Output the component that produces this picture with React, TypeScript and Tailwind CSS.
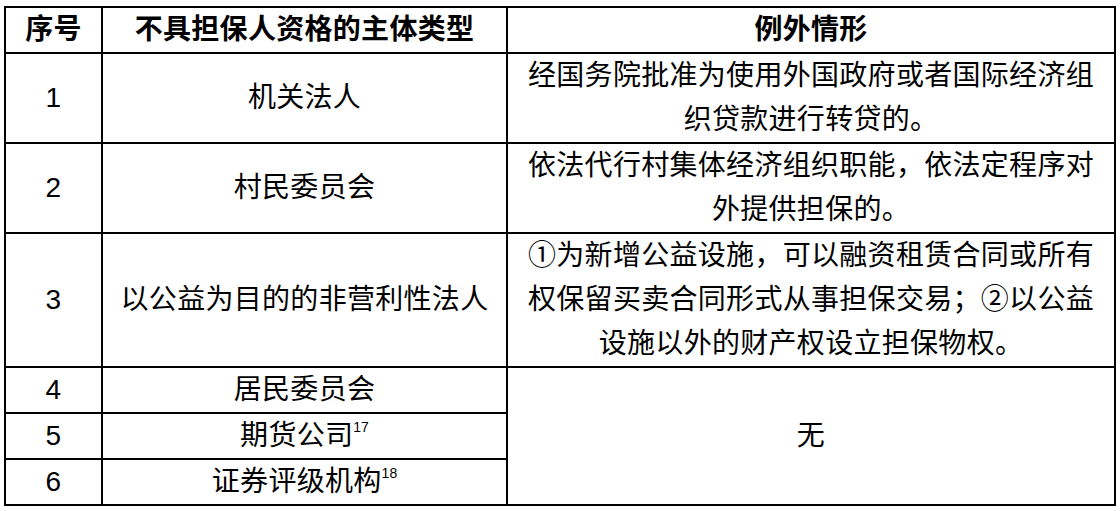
import React from "react";

const font = { fontFamily: '"Liberation Sans", "Noto Sans CJK SC", sans-serif' };

const rows: { n: string; type: React.ReactNode; ex?: string }[] = [
  { n: "1", type: "机关法人", ex: "经国务院批准为使用外国政府或者国际经济组织贷款进行转贷的。" },
  { n: "2", type: "村民委员会", ex: "依法代行村集体经济组织职能，依法定程序对外提供担保的。" },
  {
    n: "3",
    type: "以公益为目的的非营利性法人",
    ex: "①为新增公益设施，可以融资租赁合同或所有权保留买卖合同形式从事担保交易；②以公益设施以外的财产权设立担保物权。",
  },
];

export default function App() {
  const td = "border-2 border-black text-center align-middle px-[12px] py-0";
  return (
    <div className="bg-white w-[1120px] h-[511px] pt-[6px] pl-[4px] text-black" style={font}>
      <table className="border-collapse table-fixed w-[1110px] text-[28px] leading-[44px] tracking-[0.3px]">
        <colgroup>
          <col className="w-[97px]" />
          <col className="w-[405px]" />
          <col className="w-[608px]" />
        </colgroup>
        <thead>
          <tr>
            <th className={`${td} font-bold px-0`}>序号</th>
            <th className={`${td} font-bold px-0`}>不具担保人资格的主体类型</th>
            <th className={`${td} font-bold`}>例外情形</th>
          </tr>
        </thead>
        <tbody>
          {rows.map((r) => (
            <tr key={r.n}>
              <td className={`${td} px-0`}>{r.n}</td>
              <td className={`${td} px-0`}>{r.type}</td>
              <td className={td}>{r.ex}</td>
            </tr>
          ))}
          <tr>
            <td className={`${td} px-0`}>4</td>
            <td className={`${td} px-0`}>居民委员会</td>
            <td className={td} rowSpan={3}>无</td>
          </tr>
          <tr>
            <td className={`${td} px-0`}>5</td>
            <td className={`${td} px-0`}>
              期货公司<sup className="text-[14px] tracking-normal relative -top-[13px] align-baseline">17</sup>
            </td>
          </tr>
          <tr>
            <td className={`${td} px-0`}>6</td>
            <td className={`${td} px-0`}>
              证券评级机构<sup className="text-[14px] tracking-normal relative -top-[13px] align-baseline">18</sup>
            </td>
          </tr>
        </tbody>
      </table>
    </div>
  );
}
